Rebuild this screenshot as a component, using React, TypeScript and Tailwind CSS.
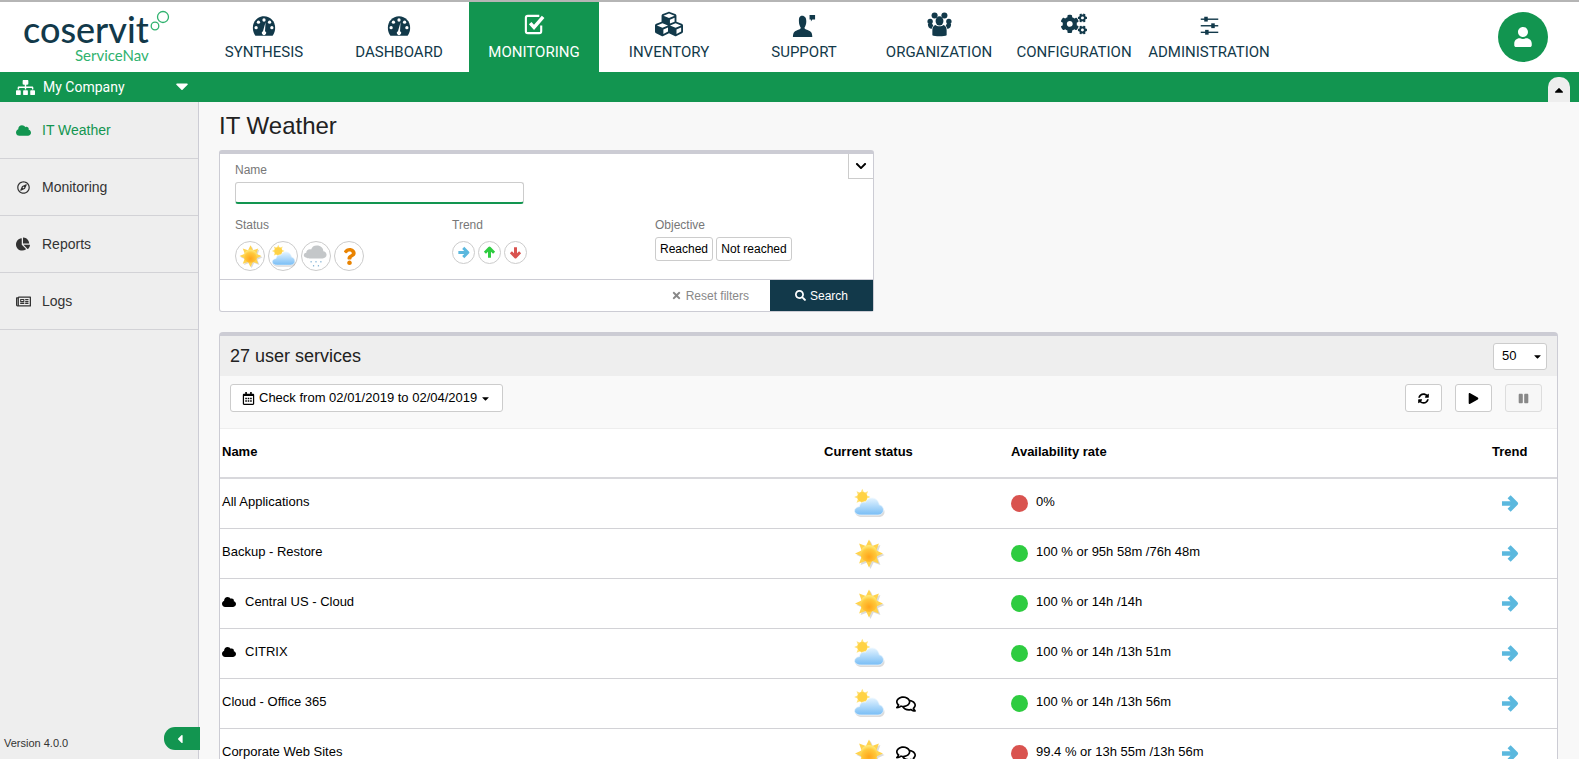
import { ReactNode } from "react";
import {
  FaCaretDown,
  FaCaretLeft,
  FaCaretUp,
  FaChartPie,
  FaChevronDown,
  FaCloud,
  FaCogs,
  FaCubes,
  FaPause,
  FaPlay,
  FaQuestion,
  FaRegCalendarAlt,
  FaRegComments,
  FaRegCompass,
  FaRegNewspaper,
  FaSearch,
  FaSitemap,
  FaSyncAlt,
  FaTimes,
  FaUser,
} from "react-icons/fa";

const navy = "#12394a";

function Gauge() {
  return (
    <svg viewBox="0 0 28 23" className="mt-[3px] h-[20px] w-[24px]">
      <path
        fill={navy}
        d="M14 0C6.5 0 1 6 1 13.500c0 3.500 1 6.800 3 9.500h20c2-2.700 3-6 3-9.500C27 6 21.500 0 14 0z"
      />
      <circle cx="14" cy="4.500" r="1.900" fill="#fff" />
      <circle cx="7.500" cy="7" r="1.900" fill="#fff" />
      <circle cx="20.500" cy="7" r="1.900" fill="#fff" />
      <circle cx="4.800" cy="13.500" r="1.900" fill="#fff" />
      <circle cx="23.200" cy="13.500" r="1.900" fill="#fff" />
      <path fill="#fff" d="M15.800 7l-.6 10.500a2.400 2.400 0 1 1-2.400 0z" />
    </svg>
  );
}

function CheckBox({ color }: { color: string }) {
  return (
    <svg viewBox="0 0 24 24" className="h-[23px] w-[23px]">
      <path
        d="M19 13v6a2 2 0 0 1-2 2H5a2 2 0 0 1-2-2V5a2 2 0 0 1 2-2h12"
        fill="none"
        stroke={color}
        strokeWidth="2.200"
      />
      <path d="M7.500 10.500l4 4.500L21 4" fill="none" stroke={color} strokeWidth="3.600" />
    </svg>
  );
}

function Agent() {
  return (
    <svg viewBox="0 0 28 26" className="mt-[4px] h-[24px] w-[26px]">
      <path
        fill={navy}
        d="M12 2c3 0 4.500 2.500 4.500 6 0 3-1 5-2 7 0 2 5 2.500 7 4.500 1 1 1.500 3 1.500 5.500H2c0-2.500.5-4.500 1.500-5.500 2-2 7-2.500 7-4.500-1-2-2-4-2-7C8.500 4.500 9 2 12 2z"
      />
      <path fill={navy} d="M20 1h6v5h-3l-1.500 2V6H20z" />
    </svg>
  );
}

function Group() {
  return (
    <svg viewBox="0 0 28 28" className="h-[25px] w-[25px]" fill={navy}>
      <circle cx="8.500" cy="4" r="3.400" />
      <circle cx="19.500" cy="4" r="3.400" />
      <circle cx="3.500" cy="10.500" r="3" />
      <circle cx="24.500" cy="10.500" r="3" />
      <ellipse cx="14" cy="10" rx="4.400" ry="5.200" />
      <path d="M1 13.500c0 3 1 5 4 5.500l2-4-2-3zM27 13.500c0 3-1 5-4 5.500l-2-4 2-3z" />
      <path d="M9.500 14.500c-2.500 1-3.500 3-3.500 6V26c2 1.500 14 1.500 16 0v-5.500c0-3-1-5-3.500-6-1.500 2-7.500 2-9 0z" />
    </svg>
  );
}

function Sliders() {
  return (
    <svg viewBox="0 0 24 24" className="mt-[3px] h-[21px] w-[21px]" fill={navy}>
      <rect x="2" y="4" width="20" height="1.600" />
      <rect x="2" y="11.500" width="20" height="1.600" />
      <rect x="2" y="19" width="20" height="1.600" />
      <rect x="6" y="2" width="4" height="5.500" />
      <rect x="14" y="9.500" width="4" height="5.500" />
      <rect x="7" y="17" width="4" height="5.500" />
    </svg>
  );
}

const rayPath =
  "M16 1.500L19.100 8.100 25.900 5.600 23.400 12.400 30 15.500 23.400 18.600 25.900 25.400 19.100 22.900 16 29.500 12.900 22.900 6.100 25.400 8.600 18.600 2 15.500 8.600 12.400 6.100 5.600 12.900 8.100z";

function Sun({ size = 30 }: { size?: number }) {
  return (
    <svg viewBox="0 0 32 32" width={size} height={size}>
      <defs>
        <radialGradient id="sunCore" cx="0.5" cy="0.7" r="0.65">
          <stop offset="0" stopColor="#ffa51c" />
          <stop offset="0.7" stopColor="#ffc93c" />
          <stop offset="1" stopColor="#ffe878" />
        </radialGradient>
      </defs>
      <path fill="#999" opacity="0.35" transform="translate(1.500 1.500)" d={rayPath} />
      <path fill="#ffd34e" d={rayPath} />
      <circle cx="16" cy="15.500" r="8.500" fill="url(#sunCore)" />
    </svg>
  );
}

const cloudPath =
  "M8 27h17c3.300 0 5.500-2.200 5.500-5s-1.800-4.800-4.300-5.200C25.800 13 22.800 10 19 10c-3 0-5.300 1.700-6.500 4.200-3-.8-5.800 1.200-6 4.300C3.500 19 1.500 20.800 1.500 23S4.500 27 8 27z";

function Cloudy({ size = 32 }: { size?: number }) {
  return (
    <svg viewBox="0 0 32 32" width={size} height={size}>
      <defs>
        <linearGradient id="cloudFill" x1="0" y1="0" x2="0" y2="1">
          <stop offset="0" stopColor="#e4f4ff" />
          <stop offset="1" stopColor="#78bdf5" />
        </linearGradient>
      </defs>
      <g transform="translate(0 0) scale(0.58)">
        <path fill="#ffe27a" d={rayPath} />
        <circle cx="16" cy="15.500" r="8.500" fill="#ffd245" />
      </g>
      <path fill="#999" opacity="0.35" transform="translate(1 2)" d={cloudPath} />
      <path fill="url(#cloudFill)" stroke="#eef8ff" strokeWidth="0.700" d={cloudPath} />
    </svg>
  );
}

function Rain() {
  return (
    <svg viewBox="0 0 32 32" width={26} height={26}>
      <path
        fill="#c4c7c9"
        d="M8 19h16c3 0 5-2 5-4.500S27 10 25 10c0-4-3-7-8-7-4 0-6 2-7 5-3-1-6 1-6 4-2 0-3 1.500-3 3.500S5 19 8 19z"
      />
      <path
        d="M10 22v3M16 22v3M22 22v3M13 27v3M19 27v3"
        stroke="#8db9d8"
        strokeWidth="1.500"
        strokeDasharray="2 1"
      />
    </svg>
  );
}

function Arrow({ color, size, rotate = "" }: { color: string; size: number; rotate?: string }) {
  return (
    <svg viewBox="0 0 24 24" width={size} height={size} className={rotate}>
      <path
        d="M2.500 12H19M11.500 3.500L20 12l-8.500 8.500"
        fill="none"
        stroke={color}
        strokeWidth="5.500"
        strokeLinejoin="round"
      />
    </svg>
  );
}

function Infinity8() {
  return (
    <svg viewBox="0 0 20 22" className="mb-[33px] ml-[1px] h-[22px] w-[20px] shrink-0">
      <circle cx="13" cy="7" r="5.500" fill="none" stroke="#2fb26e" strokeWidth="1.300" />
      <circle cx="5" cy="16" r="3.800" fill="none" stroke="#2fb26e" strokeWidth="1.300" />
    </svg>
  );
}

const navItems: { label: string; icon: ReactNode; active?: boolean }[] = [
  { label: "SYNTHESIS", icon: <Gauge /> },
  { label: "DASHBOARD", icon: <Gauge /> },
  { label: "MONITORING", icon: <CheckBox color="#fff" />, active: true },
  { label: "INVENTORY", icon: <FaCubes className="text-[28px]" /> },
  { label: "SUPPORT", icon: <Agent /> },
  { label: "ORGANIZATION", icon: <Group /> },
  { label: "CONFIGURATION", icon: <FaCogs className="text-[26px]" /> },
  { label: "ADMINISTRATION", icon: <Sliders /> },
];

const sideItems: { label: string; icon: ReactNode; active?: boolean }[] = [
  { label: "IT Weather", icon: <FaCloud className="text-[15px]" />, active: true },
  { label: "Monitoring", icon: <FaRegCompass className="text-[13px]" /> },
  { label: "Reports", icon: <FaChartPie className="text-[14px]" /> },
  { label: "Logs", icon: <FaRegNewspaper className="text-[15px]" /> },
];

type Row = {
  name: string;
  cloud?: boolean;
  status: "sun" | "cloudy";
  comment?: boolean;
  ok: boolean;
  rate: string;
};

const rows: Row[] = [
  { name: "All Applications", status: "cloudy", ok: false, rate: "0%" },
  { name: "Backup - Restore", status: "sun", ok: true, rate: "100 % or 95h 58m /76h 48m" },
  { name: "Central US - Cloud", cloud: true, status: "sun", ok: true, rate: "100 % or 14h /14h" },
  { name: "CITRIX", cloud: true, status: "cloudy", ok: true, rate: "100 % or 14h /13h 51m" },
  { name: "Cloud - Office 365", status: "cloudy", comment: true, ok: true, rate: "100 % or 14h /13h 56m" },
  { name: "Corporate Web Sites", status: "sun", comment: true, ok: false, rate: "99.4 % or 13h 55m /13h 56m" },
];

function StatusCircle({ children }: { children: ReactNode }) {
  return (
    <span className="flex h-[30px] w-[30px] items-center justify-center rounded-full border border-[#ccc] bg-white">
      {children}
    </span>
  );
}

function TrendCircle({ children }: { children: ReactNode }) {
  return (
    <span className="flex h-[23px] w-[23px] items-center justify-center rounded-full border border-[#ccc] bg-white">
      {children}
    </span>
  );
}

export default function App() {
  return (
    <div className="flex h-[759px] w-[1579px] flex-col overflow-hidden bg-white font-['Liberation_Sans',Arial,sans-serif] text-[12px] text-black">
      {/* Top nav */}
      <header className="flex h-[72px] shrink-0 border-t-2 border-t-[#b5b5b5] bg-white">
        <div className="flex w-[199px] shrink-0 items-end pb-[7px] pl-[23px]">
          <div className="flex flex-col items-end">
            <span className="font-['Lato',sans-serif] text-[36px] leading-[33px] font-medium text-[#12394a]">
              coservit
            </span>
            <span className="font-['Lato',sans-serif] text-[15px] leading-[19px] text-[#2fb26e]">
              ServiceNav
            </span>
          </div>
          <Infinity8 />
        </div>
        <nav className="flex gap-[5px]">
          {navItems.map((item) => (
            <div
              key={item.label}
              className={`flex w-[130px] shrink-0 flex-col items-center font-['Roboto',sans-serif] text-[15px] ${
                item.active ? "bg-[#129550] text-white" : "text-[#12394a]"
              }`}
            >
              <div className="flex h-[41px] items-center justify-center pt-[3px]">{item.icon}</div>
              <span className="leading-[18px] whitespace-nowrap">{item.label}</span>
            </div>
          ))}
        </nav>
        <div className="flex flex-1 justify-end pt-[10px] pr-[31px]">
          <span className="flex h-[50px] w-[50px] items-center justify-center rounded-full bg-[#129550] text-white">
            <FaUser className="text-[20px]" />
          </span>
        </div>
      </header>

      {/* Company bar */}
      <div className="relative flex h-[30px] shrink-0 items-center bg-[#129550] pl-[16px] text-white">
        <FaSitemap className="mr-[8px] text-[19px]" />
        <span className="w-[129px] font-['Roboto',sans-serif] text-[14px]">My Company</span>
        <FaCaretDown className="mb-[3px] text-[20px]" />
        <span className="absolute right-[9px] bottom-0 flex h-[25px] w-[22px] items-center justify-center rounded-t-[10px] bg-[#eeeeee] text-black">
          <FaCaretUp className="text-[14px]" />
        </span>
      </div>

      <div className="flex min-h-0 flex-1">
        {/* Sidebar */}
        <aside className="relative flex w-[199px] shrink-0 flex-col border-r border-r-[#ccccd4] bg-[#eeeeee] text-[14px] text-[#333]">
          {sideItems.map((item) => (
            <div
              key={item.label}
              className={`flex h-[57px] items-center border-b border-b-[#d2d2d6] ${
                item.active ? "text-[#129550]" : ""
              }`}
            >
              <span className="mr-[11px] ml-[15px] flex w-[16px] justify-center">{item.icon}</span>
              {item.label}
            </div>
          ))}
          <span className="mt-auto mb-[9px] ml-[4px] text-[11px] leading-[14px]">Version 4.0.0</span>
          <span className="absolute right-[-2px] bottom-[9px] flex h-[23px] w-[36px] items-center rounded-l-[11px] bg-[#129550] pl-[9px] text-white">
            <FaCaretLeft className="text-[14px]" />
          </span>
        </aside>

        {/* Main content */}
        <main className="min-w-0 flex-1 bg-[#f8f8f8] pr-[21px] pl-[20px]">
          <h1 className="pt-[10px] text-[24px] leading-[28px] text-[#222]">IT Weather</h1>

          {/* Filter panel */}
          <section className="relative mt-[10px] w-[655px] rounded-[3px] border border-t-4 border-[#ccccd4] bg-white">
            <div className="flex h-[125px] flex-col px-[15px] pt-[9px] text-[#777]">
              <label className="leading-[14px]">Name</label>
              <div className="mt-[5px] h-[22px] w-[289px] rounded-[3px] border border-b-2 border-[#ccc] border-b-[#129550]" />
              <div className="mt-[14px] flex">
                <div className="w-[217px]">
                  <div className="leading-[14px]">Status</div>
                  <div className="mt-[9px] flex gap-[3px]">
                    <StatusCircle><Sun size={25} /></StatusCircle>
                    <StatusCircle><Cloudy size={25} /></StatusCircle>
                    <StatusCircle><Rain /></StatusCircle>
                    <StatusCircle><FaQuestion className="text-[17px] text-[#e98300]" /></StatusCircle>
                  </div>
                </div>
                <div className="w-[203px]">
                  <div className="leading-[14px]">Trend</div>
                  <div className="mt-[9px] flex gap-[3px]">
                    <TrendCircle><Arrow color="#5bb8de" size={13} /></TrendCircle>
                    <TrendCircle><Arrow color="#2ecc40" size={13} rotate="-rotate-90" /></TrendCircle>
                    <TrendCircle><Arrow color="#d9534f" size={13} rotate="rotate-90" /></TrendCircle>
                  </div>
                </div>
                <div>
                  <div className="leading-[14px]">Objective</div>
                  <div className="mt-[5px] flex gap-[3px] text-black">
                    <span className="flex h-[24px] w-[58px] items-center justify-center rounded-[3px] border border-[#ccc]">Reached</span>
                    <span className="flex h-[24px] w-[76px] items-center justify-center rounded-[3px] border border-[#ccc]">Not reached</span>
                  </div>
                </div>
              </div>
            </div>
            <span className="absolute top-0 right-0 flex h-[25px] w-[25px] items-center justify-center border-b border-l border-[#ccc] bg-white">
              <FaChevronDown className="text-[12px]" />
            </span>
            <div className="flex h-[32px] items-center justify-end border-t border-t-[#ccccd4]">
              <span className="mr-[21px] flex items-center gap-[4px] text-[#888]">
                <FaTimes className="text-[11px]" /> Reset filters
              </span>
              <span className="flex h-full w-[103px] items-center justify-center gap-[4px] bg-[#12394a] text-white">
                <FaSearch className="text-[11px]" /> Search
              </span>
            </div>
          </section>

          {/* Services table */}
          <section className="mt-[20px] rounded-t-[4px] border-x border-t-4 border-x-[#ccccd4] border-t-[#ccccd4] bg-white text-[13px]">
            <div className="flex h-[40px] items-center justify-between bg-[#eeeeee] px-[10px]">
              <span className="text-[18px] text-[#222]">27 user services</span>
              <span className="flex h-[27px] w-[54px] items-center justify-between rounded-[3px] border border-[#ccc] bg-white pr-[3px] pl-[8px]">
                50 <FaCaretDown className="text-[11px]" />
              </span>
            </div>
            <div className="flex h-[53px] items-start justify-between border-b border-b-[#eeeeee] bg-[#f9f9f9] pt-[8px] pr-[15px] pl-[10px]">
              <span className="flex h-[28px] items-center gap-[3px] rounded-[3px] border border-[#ccc] bg-white px-[11px]">
                <FaRegCalendarAlt className="mr-[1px] text-[13px]" />
                Check from 02/01/2019 to 02/04/2019
                <FaCaretDown className="text-[11px]" />
              </span>
              <div className="flex gap-[13px]">
                <span className="flex h-[28px] w-[37px] items-center justify-center rounded-[3px] border border-[#ccc] bg-white">
                  <FaSyncAlt className="text-[11px]" />
                </span>
                <span className="flex h-[28px] w-[37px] items-center justify-center rounded-[3px] border border-[#ccc] bg-white">
                  <FaPlay className="text-[11px]" />
                </span>
                <span className="flex h-[28px] w-[37px] items-center justify-center rounded-[3px] border border-[#ddd] bg-[#f7f7f7] text-[#888]">
                  <FaPause className="text-[11px]" />
                </span>
              </div>
            </div>

            <div className="flex h-[50px] items-center border-b-2 border-b-[#d8d8dc] pb-[2px] pl-[2px] font-bold">
              <div className="w-[602px]">Name</div>
              <div className="w-[187px]">Current status</div>
              <div className="w-[481px]">Availability rate</div>
              <div>Trend</div>
            </div>

            {rows.map((row) => (
              <div key={row.name} className="flex h-[50px] items-center border-b border-b-[#d2d2d6] pl-[2px]">
                <div className="mb-[4px] flex w-[631px] items-center">
                  {row.cloud && <FaCloud className="mr-[9px] text-[14px]" />}
                  {row.name}
                </div>
                <div className="flex w-[158px] items-center">
                  {row.status === "sun" ? <Sun size={32} /> : <Cloudy size={32} />}
                  {row.comment && <FaRegComments className="ml-[11px] text-[20px]" />}
                </div>
                <div className="flex w-[489px] items-center">
                  <span className={`mr-[8px] h-[17px] w-[17px] rounded-full ${row.ok ? "bg-[#2ecc40]" : "bg-[#d9534f]"}`} />
                  <span className="mb-[4px]">{row.rate}</span>
                </div>
                <Arrow color="#5bb8de" size={19} />
              </div>
            ))}
          </section>
        </main>
      </div>
    </div>
  );
}
